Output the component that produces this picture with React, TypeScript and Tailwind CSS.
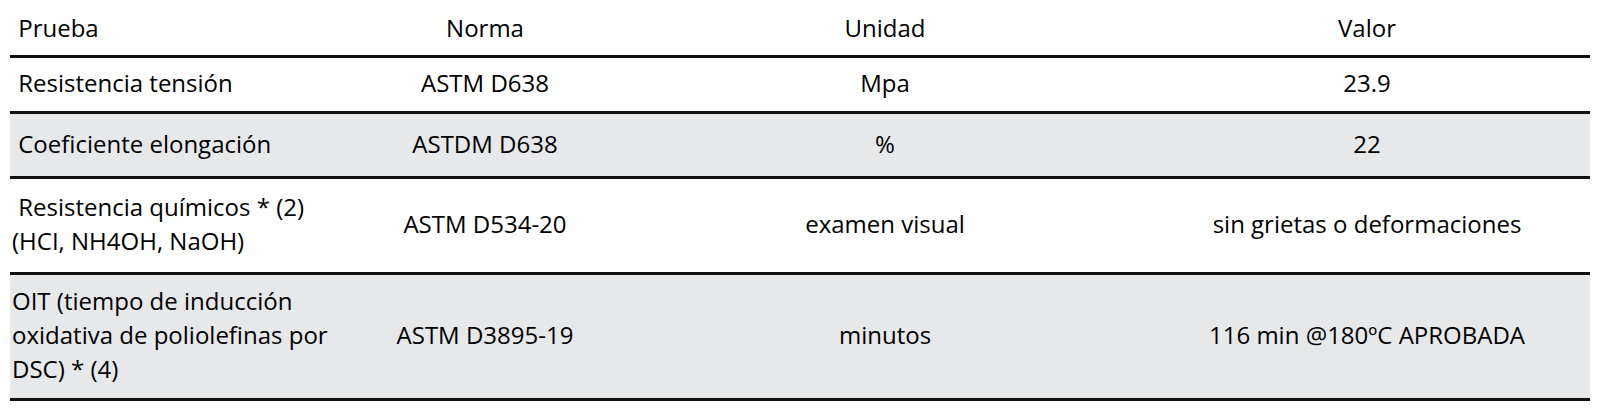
import React from 'react';

type Row = {
  prueba: string;
  norma: string;
  unidad: string;
  valor: string;
  h: string;
  shade: boolean;
};

const rows: Row[] = [
  { prueba: '\u00a0Resistencia tensión', norma: 'ASTM D638', unidad: 'Mpa', valor: '23.9', h: 'h-[56px]', shade: false },
  { prueba: '\u00a0Coeficiente elongación', norma: 'ASTDM D638', unidad: '%', valor: '22', h: 'h-[65px]', shade: true },
  { prueba: '\u00a0Resistencia químicos * (2) (HCI, NH4OH, NaOH)', norma: 'ASTM D534-20', unidad: 'examen visual', valor: 'sin grietas o deformaciones', h: 'h-[96px]', shade: false },
  { prueba: 'OIT (tiempo de inducción oxidativa de poliolefinas por DSC) * (4)', norma: 'ASTM D3895-19', unidad: 'minutos', valor: '116 min @180ºC APROBADA', h: 'h-[126px]', shade: true },
];

const grid = 'grid grid-cols-[334px_282px_518px_446px] border-b-[3px] border-[#111]';

export default function App() {
  return (
    <div className="w-[1600px] h-[409px] bg-white px-[10px] font-['Open_Sans',sans-serif] text-[24px] leading-[34px] text-black">
      {/* Header */}
      <div className={`${grid} h-[58px]`}>
        <div className="flex items-center px-[2px]">{'\u00a0Prueba'}</div>
        <div className="flex items-center justify-center">Norma</div>
        <div className="flex items-center justify-center">Unidad</div>
        <div className="flex items-center justify-center">Valor</div>
      </div>

      {rows.map((r) => (
        <div key={r.norma} className={`${grid} ${r.h} ${r.shade ? 'bg-[#e7e8ea]' : 'bg-white'}`}>
          <div className="flex items-center px-[2px] pb-[3px]">
            <span>{r.prueba}</span>
          </div>
          <div className="flex items-center justify-center text-center pb-[3px]">{r.norma}</div>
          <div className="flex items-center justify-center text-center pb-[3px]">{r.unidad}</div>
          <div className="flex items-center justify-center text-center pb-[3px]">{r.valor}</div>
        </div>
      ))}
    </div>
  );
}
